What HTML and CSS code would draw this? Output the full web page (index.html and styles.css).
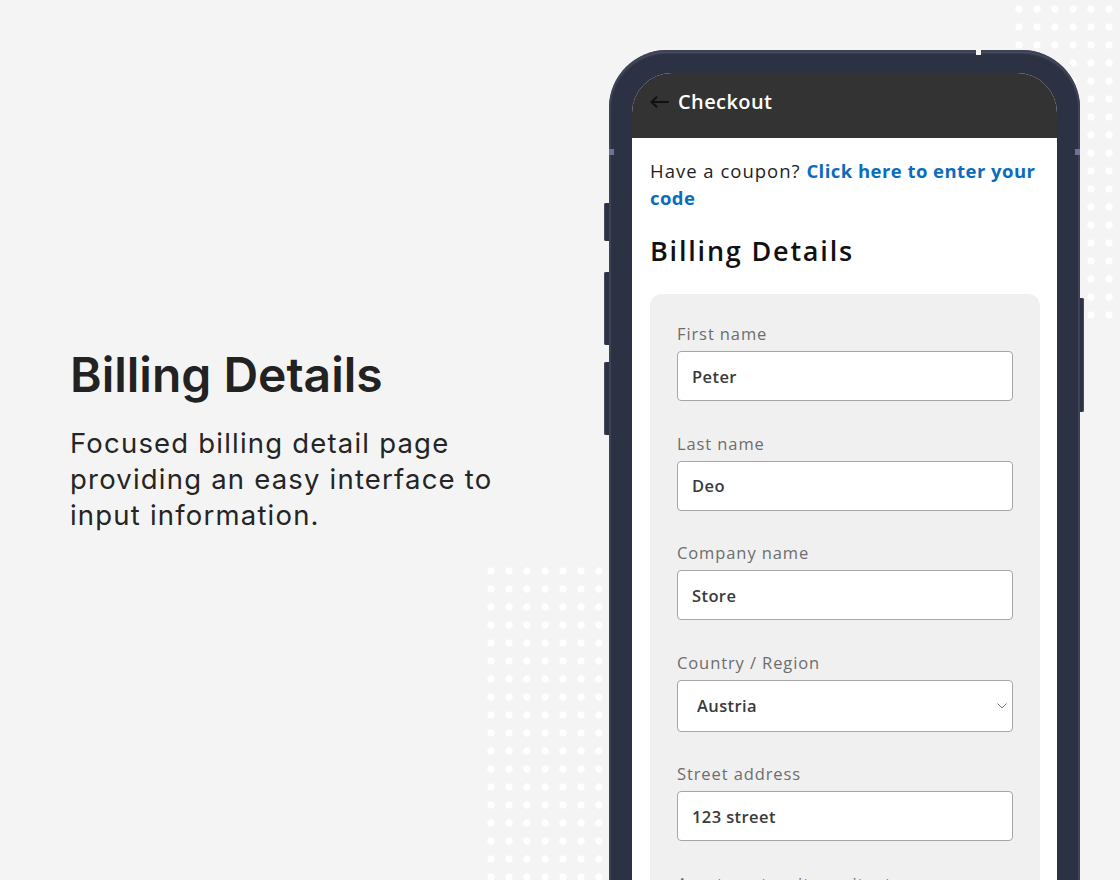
FILE: index.html
```html
<!DOCTYPE html>
<html lang="en">
<head>
    <meta charset="UTF-8">
    <meta name="viewport" content="width=device-width, initial-scale=1.0">
    <title>Billing Details</title>
    <link rel="stylesheet" href="styles.css">
</head>
<body>
    <div class="canvas">
        <div class="dots dots-left"></div>
        <div class="dots dots-right"></div>

        <section class="intro">
            <h1 class="intro-title">Billing Details</h1>
            <p class="intro-text">Focused billing detail page providing an easy interface to input information.</p>
        </section>

        <div class="phone">
            <span class="phone-key key-1"></span>
            <span class="phone-key key-2"></span>
            <span class="phone-key key-3"></span>
            <span class="phone-key key-power"></span>
            <span class="phone-band band-left"></span>
            <span class="phone-band band-right"></span>
            <span class="phone-band band-top"></span>

            <div class="screen">
                <header class="app-bar">
                    <svg class="app-back" width="19" height="12" viewBox="0 0 19 12" fill="none" stroke="#111" stroke-width="2" stroke-linecap="round" stroke-linejoin="round">
                        <path d="M18 6H2"/>
                        <path d="M6.5 1.2L1.5 6l5 4.8"/>
                    </svg>
                    <span class="app-title">Checkout</span>
                </header>

                <div class="checkout">
                    <p class="coupon">Have a coupon? <a href="#">Click here to enter your code</a></p>
                    <h2 class="checkout-title">Billing Details</h2>

                    <form class="billing-card">
                        <div class="field">
                            <label for="first">First name</label>
                            <input id="first" type="text" value="Peter">
                        </div>
                        <div class="field">
                            <label for="last">Last name</label>
                            <input id="last" type="text" value="Deo">
                        </div>
                        <div class="field">
                            <label for="company">Company name</label>
                            <input id="company" type="text" value="Store">
                        </div>
                        <div class="field">
                            <label for="country">Country / Region</label>
                            <div class="select-wrap">
                                <select id="country">
                                    <option>Austria</option>
                                    <option>Germany</option>
                                    <option>Switzerland</option>
                                </select>
                                <svg class="select-arrow" width="10" height="6" viewBox="0 0 10 6" fill="none" stroke="#777" stroke-width="1">
                                    <path d="M0.5 0.5L5 5l4.5-4.5"/>
                                </svg>
                            </div>
                        </div>
                        <div class="field">
                            <label for="street">Street address</label>
                            <input id="street" type="text" value="123 street">
                        </div>
                        <div class="field">
                            <label for="apt">Apartment, suite, unit, etc.</label>
                            <input id="apt" type="text" value="">
                        </div>
                    </form>
                </div>
            </div>
        </div>
    </div>
</body>
</html>
```

FILE: styles.css
```css
* {
    box-sizing: border-box;
}

body {
    margin: 0;
    background: #f4f4f4;
}

.canvas {
    position: relative;
    width: 1120px;
    height: 880px;
    overflow: hidden;
    display: grid;
    grid-template-columns: 609px 471px;
    background: #f4f4f4;
}

/* dotted decoration */
.dots {
    position: absolute;
    background-image: radial-gradient(circle, #fff 3.3px, transparent 3.9px);
    background-size: 18px 18px;
}

.dots-left {
    left: 482px;
    top: 562px;
    width: 126px;
    height: 318px;
}

.dots-right {
    left: 1010px;
    top: 0;
    width: 110px;
    height: 324px;
}

/* left copy */
.intro {
    position: relative;
    z-index: 1;
    padding: 346px 0 0 70px;
    font-family: Inter, "Liberation Sans", sans-serif;
}

.intro-title {
    margin: 0 0 21px;
    font-size: 48px;
    line-height: 58px;
    font-weight: 600;
    color: #222;
}

.intro-text {
    margin: 0;
    width: 440px;
    font-size: 27.5px;
    line-height: 36px;
    color: #252525;
    letter-spacing: 1.2px;
}

/* phone */
.phone {
    position: relative;
    z-index: 1;
    margin-top: 50px;
    height: 880px;
    padding: 23px 23px 0;
    background: #2c3144;
    border-radius: 58px 58px 0 0;
    box-shadow: inset 0 0 0 2px #3d4256, inset 0 3px 3px -1px rgba(190, 192, 205, 0.55);
}

    .phone-key {
        position: absolute;
        background: #2c3144;
        border-radius: 2px 0 0 2px;
        box-shadow: inset 1px 0 0 #464b5f;
    }

    .key-1 {
        left: -5px;
        top: 153px;
        width: 5px;
        height: 38px;
    }

    .key-2 {
        left: -5px;
        top: 222px;
        width: 5px;
        height: 73px;
    }

    .key-3 {
        left: -5px;
        top: 312px;
        width: 5px;
        height: 73px;
    }

    .key-power {
        right: -4px;
        top: 248px;
        width: 4px;
        height: 114px;
        border-radius: 0 2px 2px 0;
        box-shadow: inset -1px 0 0 #464b5f;
    }

    .phone-band {
        position: absolute;
        background: #6d7396;
    }

    .band-left {
        left: 0;
        top: 99px;
        width: 5px;
        height: 6px;
    }

    .band-right {
        right: 0;
        top: 99px;
        width: 5px;
        height: 6px;
    }

    .band-top {
        left: 367px;
        top: 0;
        width: 5px;
        height: 5px;
        background: #f4f4f4;
    }

.screen {
    height: 100%;
    background: #fff;
    border-radius: 40px 40px 0 0;
    overflow: hidden;
    font-family: "Open Sans", "Noto Sans", sans-serif;
}

.app-bar {
    display: flex;
    align-items: center;
    gap: 9px;
    height: 65px;
    padding: 0 18px 8px;
    background: #333;
}

.app-back {
    flex: none;
}

.app-title {
    font-size: 20px;
    line-height: 24px;
    font-weight: 600;
    color: #fff;
    letter-spacing: 0.4px;
}

.checkout {
    padding: 19px 17px 0 18px;
}

.coupon {
    margin: 0;
    font-size: 18.5px;
    line-height: 27px;
    color: #1e1e1e;
    letter-spacing: 1px;
}

    .coupon a {
        color: #0b6cbd;
        font-weight: 700;
        text-decoration: none;
        letter-spacing: 0.45px;
    }

.checkout-title {
    margin: 25px 0 28px;
    font-size: 27px;
    line-height: 30px;
    font-weight: 600;
    color: #111;
    letter-spacing: 1.8px;
}

.billing-card {
    margin: 0;
    padding: 30px 27px 0;
    min-height: 700px;
    background: #f0f0f0;
    border-radius: 12px;
}

.field {
    display: flex;
    flex-direction: column;
    gap: 7px;
    margin-bottom: 32.5px;
}

    .field label {
        font-size: 16.5px;
        line-height: 20px;
        font-weight: 500;
        color: #6d6d6d;
        letter-spacing: 0.9px;
    }

    .field input,
    .field select {
        width: 100%;
        height: 50px;
        margin: 0;
        padding: 0 14px;
        border: 1px solid #a6a6a6;
        border-radius: 4px;
        background: #fff;
        font-family: "Open Sans", "Noto Sans", sans-serif;
        font-size: 16.5px;
        font-weight: 600;
        color: #3a3a3a;
        letter-spacing: 0.4px;
        outline: none;
    }

.select-wrap {
    position: relative;
}

    .select-wrap select {
        height: 52px;
        padding-left: 19px;
        appearance: none;
        -webkit-appearance: none;
    }

.select-arrow {
    position: absolute;
    right: 6px;
    top: 23px;
    pointer-events: none;
}
```
